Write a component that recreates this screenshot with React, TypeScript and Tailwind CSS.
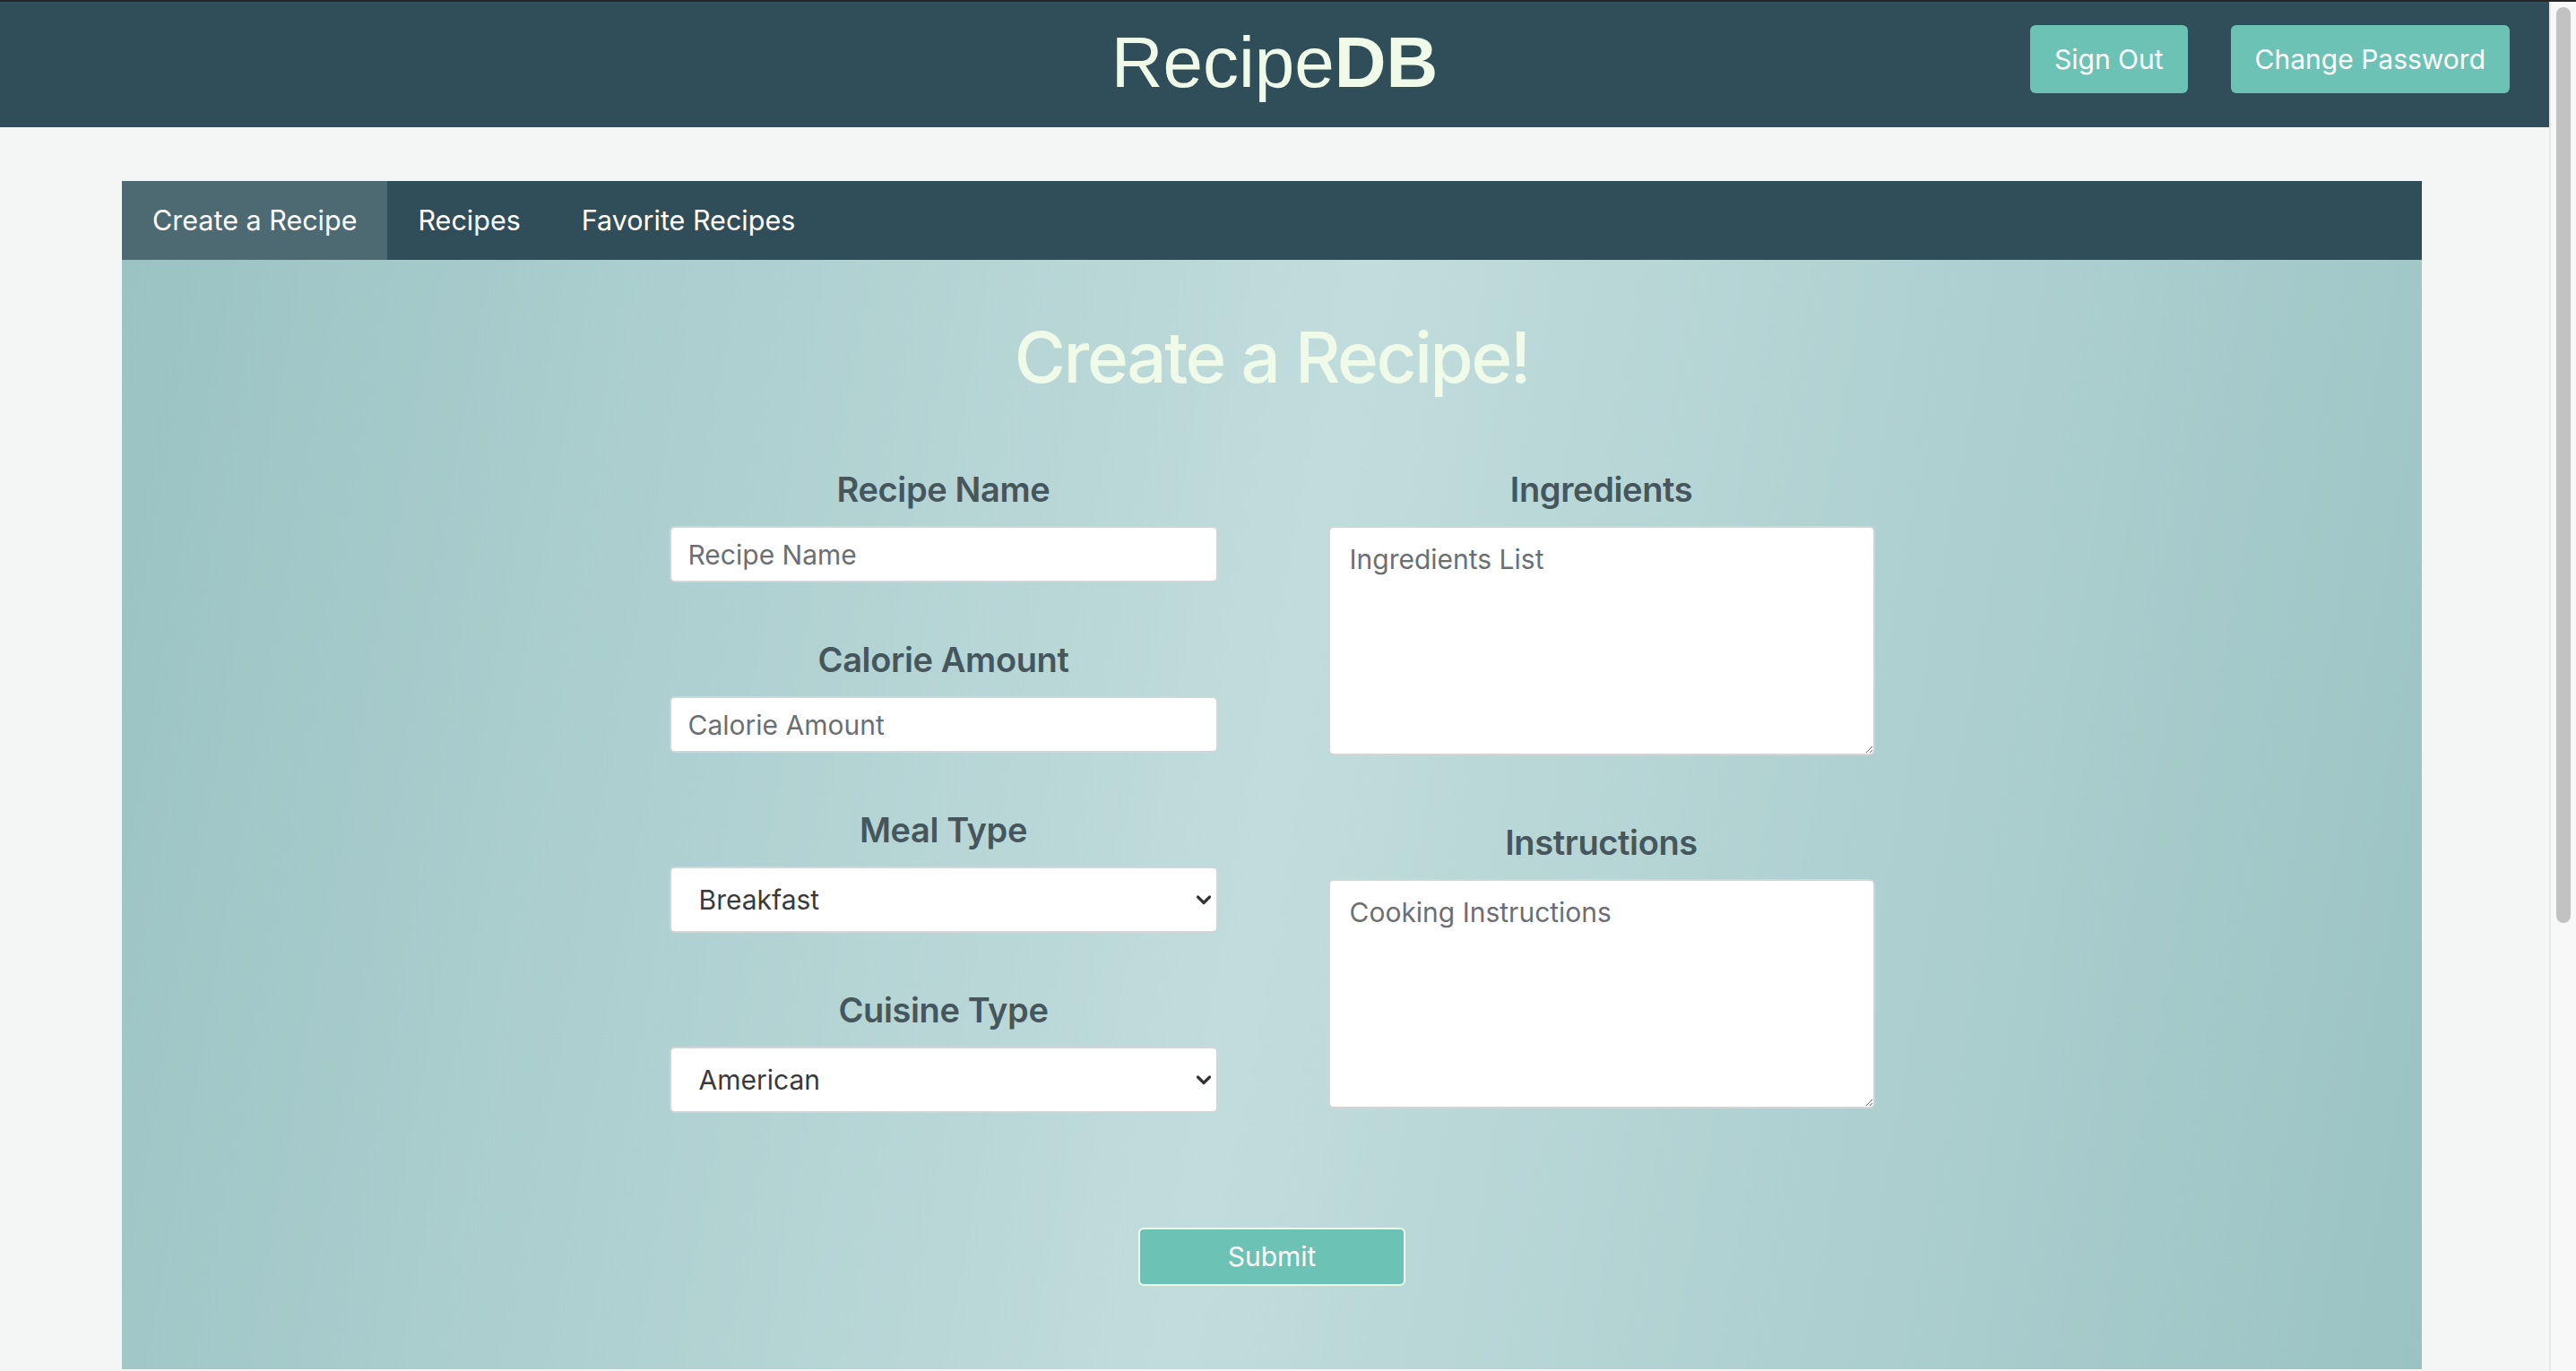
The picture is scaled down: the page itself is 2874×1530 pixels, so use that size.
import React from "react";

const labelCls =
  "mb-[22px] text-center text-[38px] leading-none font-semibold tracking-[-0.01em] text-[#45575c]";
const inputCls =
  "h-[63px] w-full rounded-[6px] border-2 border-[#d1d5d8] bg-white pl-[19px] text-[30px] text-[#333] outline-none placeholder:text-[#6c6f72]";
const selectCls =
  "h-[74px] w-full appearance-none rounded-[6px] border-2 border-[#d1d5d8] bg-white pl-[31px] text-[30px] text-[#3a3a3a] outline-none";
const textareaCls =
  "h-[256px] w-full resize-y rounded-[6px] border-2 border-[#d1d5d8] bg-white px-[22px] pt-[17px] text-[30px] leading-[36px] text-[#333] outline-none placeholder:text-[#6c6f72]";

function Chevron() {
  return (
    <svg
      width="18"
      height="12"
      viewBox="0 0 18 12"
      className="pointer-events-none absolute right-[7px] top-1/2 -translate-y-1/2"
    >
      <path
        d="M2.5 3 L9 9.5 L15.5 3"
        fill="none"
        stroke="#333"
        strokeWidth="3.2"
        strokeLinecap="round"
        strokeLinejoin="round"
      />
    </svg>
  );
}

function Field({ label, children }: { label: string; children: React.ReactNode }) {
  return (
    <div className="flex flex-col">
      <label className={labelCls}>{label}</label>
      {children}
    </div>
  );
}

export default function App() {
  return (
    <div className="flex h-screen flex-col overflow-hidden font-['Inter',sans-serif]">
      <div className="h-[2px] bg-[#262626]" />
      <div className="flex flex-1 overflow-hidden">
        <main className="flex-1 bg-[#f3f6f5]">
          <header className="grid h-[140px] grid-cols-[1fr_auto_1fr] bg-[#2f4e59]">
            <div />
            <h1 className="pt-[28px] font-['Liberation_Sans',Arial,sans-serif] text-[80px] leading-none text-[#effae9]">
              Recipe<span className="font-bold">DB</span>
            </h1>
            <div className="flex justify-end gap-[48px] pr-[44px] pt-[26px]">
              <button className="h-[76px] rounded-[6px] bg-[#6cc2b5] px-[27px] text-[30px] text-white">
                Sign Out
              </button>
              <button className="h-[76px] rounded-[6px] bg-[#6cc2b5] px-[27px] text-[30px] text-white">
                Change Password
              </button>
            </div>
          </header>

          <section className="ml-[136px] mt-[60px] w-[2566px]">
            <nav className="flex h-[88px] bg-[#2f4e59] text-[30.5px] text-white">
              <a className="flex items-center bg-[#4d6a72] px-[34px]">Create a Recipe</a>
              <a className="flex items-center px-[34px]">Recipes</a>
              <a className="flex items-center px-[34px]">Favorite Recipes</a>
            </nav>

            <div className="flex flex-col items-center bg-[linear-gradient(100deg,#9bc3c4_0%,#c1dcdc_50%,#9bc3c4_100%)] pb-[93px] pt-[70px]">
              <h2 className="text-center text-[78px] leading-none font-medium tracking-[-0.03em] text-[#effae9]">
                Create a Recipe!
              </h2>

              <form className="mt-[89px] grid grid-cols-[612px_610px] items-start gap-x-[123px]">
                <div className="flex flex-col gap-[67px]">
                  <Field label="Recipe Name">
                    <input className={inputCls} placeholder="Recipe Name" />
                  </Field>
                  <Field label="Calorie Amount">
                    <input className={inputCls} placeholder="Calorie Amount" />
                  </Field>
                  <Field label="Meal Type">
                    <div className="relative">
                      <select className={selectCls} defaultValue="Breakfast">
                        <option>Breakfast</option>
                        <option>Lunch</option>
                        <option>Dinner</option>
                        <option>Snack</option>
                      </select>
                      <Chevron />
                    </div>
                  </Field>
                  <Field label="Cuisine Type">
                    <div className="relative">
                      <select className={selectCls} defaultValue="American">
                        <option>American</option>
                        <option>Italian</option>
                        <option>Mexican</option>
                        <option>Chinese</option>
                      </select>
                      <Chevron />
                    </div>
                  </Field>
                </div>

                <div className="flex flex-col gap-[78px]">
                  <Field label="Ingredients">
                    <textarea className={textareaCls} placeholder="Ingredients List" />
                  </Field>
                  <Field label="Instructions">
                    <textarea className={textareaCls} placeholder="Cooking Instructions" />
                  </Field>
                </div>
              </form>

              <button className="mt-[128px] h-[65px] w-[298px] rounded-[6px] border-2 border-[#effae9] bg-[#6cc2b5] text-[30px] text-white">
                Submit
              </button>
            </div>
          </section>
        </main>

        <div className="w-[30px] border-l-2 border-[#e8e8e8] bg-[#f8f8f8] pl-[6px] pt-[6px]">
          <div className="h-[1022px] w-[16px] rounded-full bg-[#c2c2c2]" />
        </div>
      </div>
    </div>
  );
}
